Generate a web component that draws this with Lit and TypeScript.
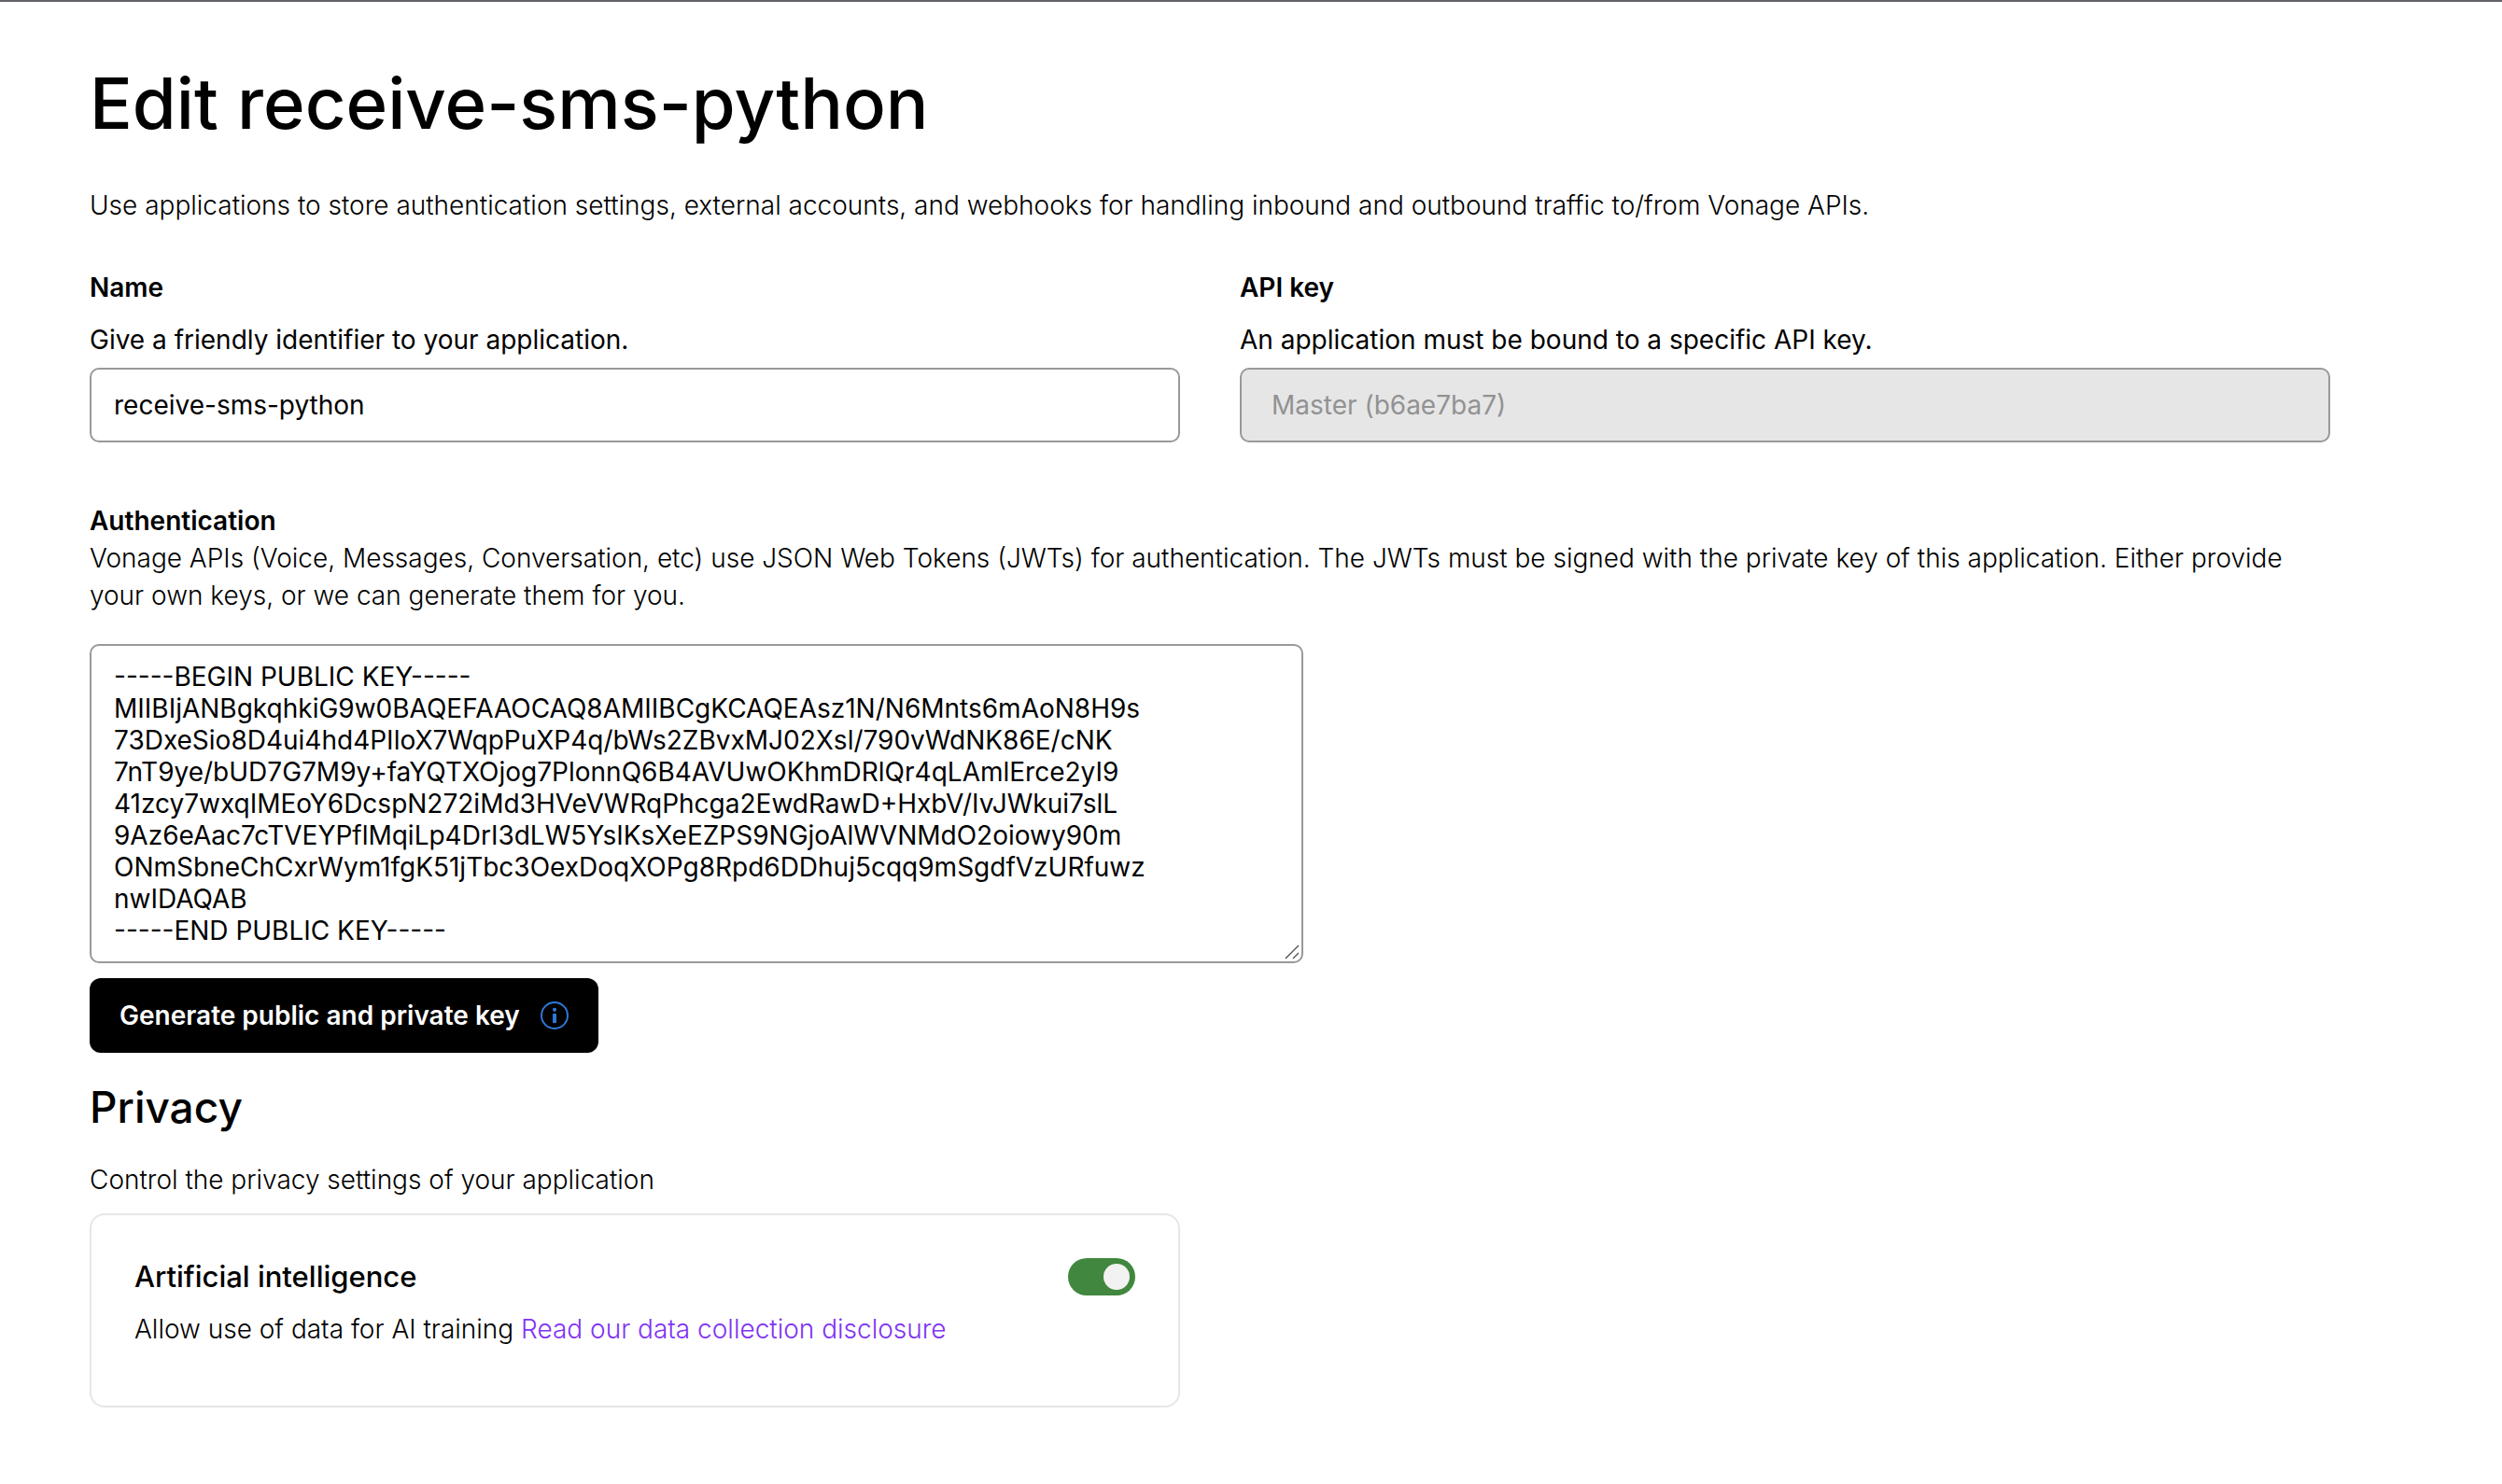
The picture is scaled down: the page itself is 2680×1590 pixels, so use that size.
import { LitElement, html, css, svg } from "lit";
import { customElement, state } from "lit/decorators.js";

const PUBLIC_KEY = `-----BEGIN PUBLIC KEY-----
MIIBIjANBgkqhkiG9w0BAQEFAAOCAQ8AMIIBCgKCAQEAsz1N/N6Mnts6mAoN8H9s
73DxeSio8D4ui4hd4PIloX7WqpPuXP4q/bWs2ZBvxMJ02Xsl/790vWdNK86E/cNK
7nT9ye/bUD7G7M9y+faYQTXOjog7PlonnQ6B4AVUwOKhmDRlQr4qLAmlErce2yI9
41zcy7wxqIMEoY6DcspN272iMd3HVeVWRqPhcga2EwdRawD+HxbV/IvJWkui7slL
9Az6eAac7cTVEYPflMqiLp4DrI3dLW5YsIKsXeEZPS9NGjoAlWVNMdO2oiowy90m
ONmSbneChCxrWym1fgK51jTbc3OexDoqXOPg8Rpd6DDhuj5cqq9mSgdfVzURfuwz
nwIDAQAB
-----END PUBLIC KEY-----`;

const infoIcon = svg`
  <circle cx="15" cy="15" r="14" fill="none" stroke="currentColor" stroke-width="2" />
  <circle cx="15" cy="8.8" r="2.1" fill="currentColor" />
  <rect x="13" y="13" width="4" height="10" rx="0.6" fill="currentColor" />
`;

@customElement("app-root")
export class AppRoot extends LitElement {
  @state() private appName = "receive-sms-python";
  @state() private publicKey = PUBLIC_KEY;
  @state() private allowTraining = true;

  static styles = css`
    :host {
      display: block;
      min-height: 100vh;
      box-sizing: border-box;
      border-top: 2px solid #656168;
      background: #fff;
      color: #000;
      font-family: Inter, "Liberation Sans", sans-serif;
      font-size: 28px;
      line-height: 40px;
    }
    * {
      box-sizing: border-box;
    }
    h1,
    h2,
    h3,
    p {
      margin: 0;
    }
    .page {
      display: flex;
      flex-direction: column;
      padding: 60px 184px 80px 96px;
    }
    .title {
      font-size: 76px;
      line-height: 96px;
      font-weight: 500;
      margin-bottom: 42px;
    }
    .light {
      font-weight: 300;
    }
    .label {
      display: block;
      font-size: 28px;
      line-height: 40px;
      font-weight: 600;
    }
    .fields {
      display: grid;
      grid-template-columns: 1fr 1fr;
      gap: 64px;
      margin: 48px 0 64px;
    }
    .hint {
      margin: 16px 0 10px;
    }
    .control {
      display: block;
      width: 100%;
      height: 80px;
      margin: 0;
      padding: 0 24px;
      border: 2px solid #999;
      border-radius: 10px;
      background: #fff;
      color: #000;
      font: inherit;
      appearance: none;
    }
    .control:disabled {
      padding: 0 32px;
      background: #e6e6e6;
      color: #929292;
      opacity: 1;
    }
    .key-box {
      position: relative;
      align-self: flex-start;
      max-width: 100%;
      margin: 32px 0 16px;
    }
    .key {
      width: 1300px;
      max-width: 100%;
      height: auto;
      padding: 16px 24px;
      line-height: 34px;
      overflow: auto;
      resize: both;
    }
    .key::-webkit-resizer {
      background: transparent;
    }
    .grip {
      position: absolute;
      right: 4px;
      bottom: 4px;
      width: 16px;
      height: 16px;
      pointer-events: none;
    }
    .generate {
      display: flex;
      align-items: center;
      align-self: flex-start;
      gap: 22px;
      height: 80px;
      padding: 0 32px;
      border: 0;
      border-radius: 12px;
      background: #000;
      color: #fff;
      font: inherit;
      font-weight: 600;
    }
    .info {
      width: 30px;
      height: 30px;
      color: #2f78d8;
    }
    .section {
      font-size: 46px;
      line-height: 56px;
      font-weight: 500;
      margin: 30px 0;
    }
    .card {
      width: calc(50% - 32px);
      margin-top: 16px;
      padding: 46px 46px 62px;
      border: 2px solid #e6e6e6;
      border-radius: 16px;
    }
    .card-head {
      display: flex;
      align-items: center;
      justify-content: space-between;
      margin-bottom: 16px;
    }
    .card-title {
      font-size: 31px;
      line-height: 40px;
      font-weight: 500;
    }
    .link {
      color: #8033f5;
      text-decoration: none;
    }
    .switch {
      display: flex;
      align-items: center;
      width: 72px;
      height: 40px;
      margin: 0;
      padding: 6px;
      border-radius: 20px;
      background: #929292;
      appearance: none;
    }
    .switch::before {
      content: "";
      width: 28px;
      height: 28px;
      border-radius: 50%;
      background: #f2f2f2;
    }
    .switch:checked {
      justify-content: flex-end;
      background: #41873f;
    }
  `;

  render() {
    return html`
      <main class="page">
        <h1 class="title">Edit receive-sms-python</h1>
        <p class="light">
          Use applications to store authentication settings, external accounts, and webhooks for
          handling inbound and outbound traffic to/from Vonage APIs.
        </p>

        <div class="fields">
          <div>
            <label class="label" for="name">Name</label>
            <p class="hint" id="name-hint">Give a friendly identifier to your application.</p>
            <input
              class="control"
              id="name"
              type="text"
              aria-describedby="name-hint"
              .value=${this.appName}
              @input=${(e: Event) => (this.appName = (e.target as HTMLInputElement).value)}
            />
          </div>
          <div>
            <label class="label" for="api-key">API key</label>
            <p class="hint" id="api-hint">An application must be bound to a specific API key.</p>
            <select class="control" id="api-key" aria-describedby="api-hint" disabled>
              <option>Master (b6ae7ba7)</option>
            </select>
          </div>
        </div>

        <label class="label" for="public-key">Authentication</label>
        <p class="light" id="auth-hint">
          Vonage APIs (Voice, Messages, Conversation, etc) use JSON Web Tokens (JWTs) for
          authentication. The JWTs must be signed with the private key of this application. Either
          provide your own keys, or we can generate them for you.
        </p>
        <div class="key-box">
          <textarea
            class="control key"
            id="public-key"
            rows="9"
            spellcheck="false"
            aria-describedby="auth-hint"
            .value=${this.publicKey}
            @input=${(e: Event) => (this.publicKey = (e.target as HTMLTextAreaElement).value)}
          ></textarea>
          <svg class="grip" viewBox="0 0 16 16" aria-hidden="true">
            <path d="M1 15 15 1M9 15l6-6" fill="none" stroke="#555" stroke-width="1.4" />
          </svg>
        </div>
        <button class="generate" type="button">
          Generate public and private key
          <svg class="info" viewBox="0 0 30 30" aria-hidden="true">${infoIcon}</svg>
        </button>

        <h2 class="section">Privacy</h2>
        <p class="light">Control the privacy settings of your application</p>
        <section class="card">
          <div class="card-head">
            <h3 class="card-title"><label for="ai">Artificial intelligence</label></h3>
            <input
              class="switch"
              id="ai"
              type="checkbox"
              role="switch"
              .checked=${this.allowTraining}
              @change=${(e: Event) => (this.allowTraining = (e.target as HTMLInputElement).checked)}
            />
          </div>
          <p class="light">
            Allow use of data for AI training
            <a class="link" href="#disclosure">Read our data collection disclosure</a>
          </p>
        </section>
      </main>
    `;
  }
}
